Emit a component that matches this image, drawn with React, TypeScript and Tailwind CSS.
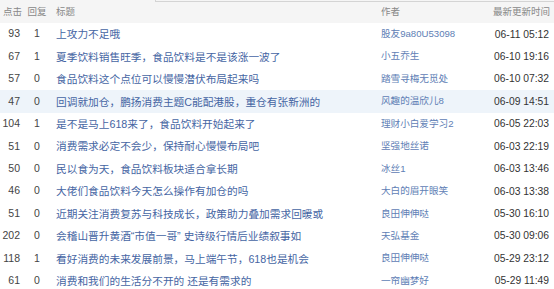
const rows = [
  { clicks: 93, replies: 1, title: "上攻力不足哦", author: "股友9a80U53098", time: "06-11 05:12" },
  { clicks: 67, replies: 1, title: "夏季饮料销售旺季，食品饮料是不是该涨一波了", author: "小五乔生", time: "06-10 19:16" },
  { clicks: 57, replies: 0, title: "食品饮料这个点位可以慢慢潜伏布局起来吗", author: "踏雪寻梅无觅处", time: "06-10 07:32" },
  { clicks: 47, replies: 0, title: "回调就加仓，鹏扬消费主题C能配港股，重仓有张新洲的", author: "风趣的温欣儿8", time: "06-09 14:51", active: true },
  { clicks: 104, replies: 1, title: "是不是马上618来了，食品饮料开始起来了", author: "理财小白爱学习2", time: "06-05 22:03" },
  { clicks: 51, replies: 0, title: "消费需求必定不会少，保持耐心慢慢布局吧", author: "坚强地丝诺", time: "06-03 22:19" },
  { clicks: 50, replies: 0, title: "民以食为天，食品饮料板块适合拿长期", author: "冰丝1", time: "06-03 13:46" },
  { clicks: 46, replies: 0, title: "大佬们食品饮料今天怎么操作有加仓的吗", author: "大白的眉开眼笑", time: "06-03 13:38" },
  { clicks: 51, replies: 0, title: "近期关注消费复苏与科技成长，政策助力叠加需求回暖或", author: "良田伸伸哒", time: "05-30 16:10" },
  { clicks: 202, replies: 0, title: "会稽山晋升黄酒“市值一哥” 史诗级行情后业绩叙事如", author: "天弘基金", time: "05-30 09:06" },
  { clicks: 118, replies: 1, title: "看好消费的未来发展前景，马上端午节，618也是机会", author: "良田伸伸哒", time: "05-29 23:12" },
  { clicks: 61, replies: 0, title: "消费和我们的生活分不开的 还是有需求的", author: "一帘幽梦好", time: "05-29 11:49" },
];

const font = "font-['Liberation_Sans','Noto_Sans_CJK_SC',sans-serif]";

export default function App() {
  return (
    <div className={`w-[554px] h-[289px] overflow-hidden bg-white ${font}`}>
      <div className="bg-[#f5f5f5]">
        <div className="flex h-[2px]">
          <div className="w-[155px]" />
          <div className="flex-1 border-l border-b border-[#d4d4d4]" />
        </div>
        <div className="grid h-[21px] grid-cols-[21px_32px_328px_1fr_auto] items-center whitespace-nowrap text-[9.5px] text-[#888]">
          <div className="pl-[3px]">点击</div>
          <div className="text-center">回复</div>
          <div className="pl-[3px]">标题</div>
          <div>作者</div>
          <div className="pr-[4px] text-right">最新更新时间</div>
        </div>
      </div>
      {rows.map((r, i) => (
        <div
          key={i}
          className={`grid h-[22.45px] grid-cols-[21px_32px_328px_1fr_auto] items-center ${
            r.active ? "bg-[#eef4fa]" : ""
          }`}
        >
          <div className="pr-[1px] text-right text-[10.5px] text-[#444]">{r.clicks}</div>
          <div className="text-center text-[10.5px] text-[#444]">{r.replies}</div>
          <div className="truncate pl-[3px] text-[10.7px] text-[#4565a3]">{r.title}</div>
          <div className="truncate text-[9.6px] text-[#6080b5]">{r.author}</div>
          <div className="pr-[5px] text-right text-[10.3px] text-[#333]">{r.time}</div>
        </div>
      ))}
    </div>
  );
}
